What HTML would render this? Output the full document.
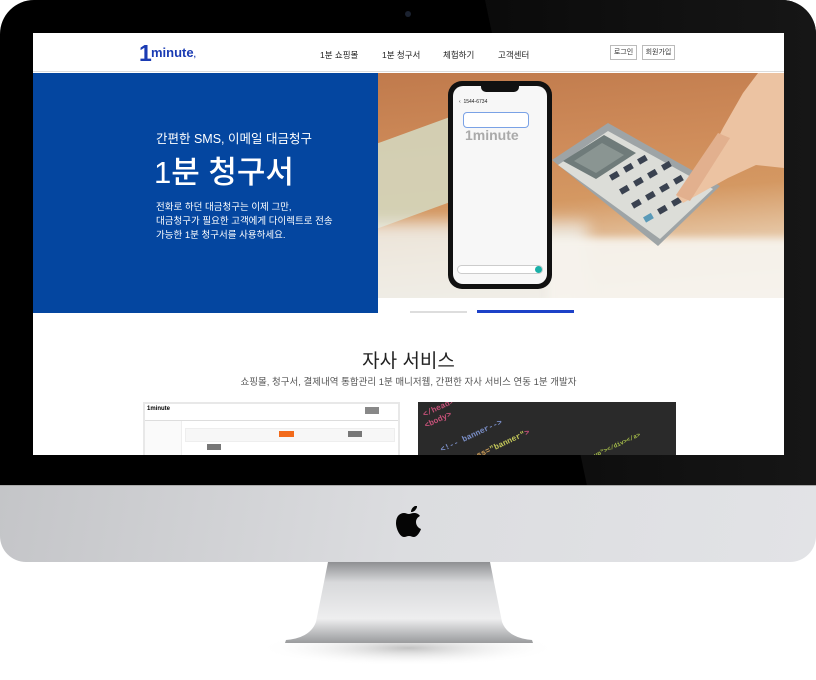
<!DOCTYPE html>
<html><head><meta charset="utf-8"><style>
*{margin:0;padding:0;box-sizing:border-box}
body{width:816px;height:680px;background:#fff;position:relative;overflow:hidden;font-family:"Liberation Sans","Noto Sans CJK KR",sans-serif}
.abs{position:absolute}
.bezel{left:0;top:0;width:816px;height:500px;background:#000;border-radius:34px 34px 0 0}
.gloss{left:470px;top:0;width:346px;height:500px;background:linear-gradient(90deg,#0a0a0a,#161616);clip-path:polygon(15px 0,100% 0,100% 100%,120px 100%);border-top-right-radius:34px}
.chin{left:0;top:485px;width:816px;height:77px;background:linear-gradient(100deg,#c4c5c8,#dcdde0 50%,#e2e3e6);border-radius:0 0 26px 26px;border-top:1px solid #aaa}
.screen{left:33px;top:33px;width:751px;height:422px;background:#fff;overflow:hidden}
.nav{font-size:8.5px;color:#222;top:16px}
.btn{top:12px;height:15px;border:1px solid #bbb;font-size:7px;line-height:13px;text-align:center;color:#333}
.k{fill:#3a4250}
</style></head><body>
<div class="abs bezel"></div>
<div class="abs gloss"></div>
<div class="abs" style="left:405px;top:11px;width:6px;height:6px;border-radius:50%;background:#1b2230"></div>
<div class="abs chin"></div>
<svg class="abs" style="left:392px;top:502px" width="34" height="40" viewBox="0 0 34 40"><path d="M23 4c-2 1-4 3-4 6 2 0 4-1 5-3 1-1 1-2 1-3zM17 12c-2 0-3-1-5-1-4 0-8 3-8 10 0 6 4 14 8 14 2 0 3-1 5-1s3 1 5 1c3 0 6-5 7-8-3-1-5-4-5-7 0-3 2-5 4-6-2-3-5-3-6-3-2 0-4 1-5 1z" fill="#050505"/></svg>
<svg class="abs" style="left:240px;top:562px" width="340" height="118" viewBox="0 0 340 118"><defs><linearGradient id="s" x1="0" x2="0" y1="0" y2="1"><stop offset="0" stop-color="#8e8f92"/><stop offset=".25" stop-color="#d8d9db"/><stop offset=".7" stop-color="#eeeeef"/><stop offset=".9" stop-color="#b5b6b8"/><stop offset="1" stop-color="#9a9b9d"/></linearGradient><radialGradient id="sh"><stop offset="0" stop-color="#999" stop-opacity=".6"/><stop offset="1" stop-color="#fff" stop-opacity="0"/></radialGradient></defs><ellipse cx="168" cy="86" rx="150" ry="18" fill="url(#sh)"/><path d="M88 0H250L262 60Q268 76 292 78L293 81H45L46 78Q70 76 76 60Z" fill="url(#s)"/></svg>
<div class="abs screen">
 <div class="abs" style="left:0;top:0;width:751px;height:39px;border-bottom:1px solid #ddd"></div>
 <div class="abs" style="left:106px;top:8px;font-size:23px;font-weight:bold;color:#1a3bb3;line-height:24px">1</div>
 <div class="abs" style="left:118px;top:12px;font-size:13px;color:#1a3bb3;font-weight:bold">minute<span style="font-size:8px">,</span></div>
 <div class="abs nav" style="left:287px">1분 쇼핑몰</div>
 <div class="abs nav" style="left:349px">1분 청구서</div>
 <div class="abs nav" style="left:410px">체험하기</div>
 <div class="abs nav" style="left:465px">고객센터</div>
 <div class="abs btn" style="left:577px;width:27px">로그인</div>
 <div class="abs btn" style="left:609px;width:33px">회원가입</div>
 <div class="abs" style="left:0;top:40px;width:345px;height:240px;background:#0446a0"></div>
 <div class="abs" style="left:123px;top:95px;font-size:12.5px;color:#fff">간편한 SMS, 이메일 대금청구</div>
 <div class="abs" style="left:121px;top:114px;font-size:31px;color:#fff;font-weight:500">1분 청구서</div>
 <div class="abs" style="left:123px;top:168px;font-size:9.5px;line-height:14px;color:#fff">전화로 하던 대금청구는 이제 그만,<br>대금청구가 필요한 고객에게 다이렉트로 전송<br>가능한 1분 청구서를 사용하세요.</div>
 <div class="abs" style="left:345px;top:40px;width:406px;height:225px;overflow:hidden;background:linear-gradient(175deg,#c07a4c 0%,#cf8c5a 35%,#d49862 55%,#e6c6a4 75%,#f2ede6 100%)">
  <div class="abs" style="left:-20px;top:60px;width:110px;height:80px;background:#d4d6bd;transform:rotate(-20deg);opacity:.9"></div>
  <div class="abs" style="left:-30px;top:150px;width:240px;height:110px;background:rgba(240,240,235,.85);filter:blur(8px)"></div>
  <div class="abs" style="left:170px;top:165px;width:270px;height:80px;background:rgba(245,242,236,.95);filter:blur(4px)"></div>
  <svg class="abs" style="left:0;top:0" width="406" height="225">
   <polygon points="174,87 230,50 342,113 280,173" fill="#9ea4a6"/>
   <polygon points="180,92 230,58 335,116 282,166" fill="#dcddd8"/>
   <polygon points="185,88 226,62 258,80 218,106" fill="#6f7b7a"/>
   <polygon points="196,88 224,70 246,82 218,100" fill="#8a9592"/>
   <g>
    <rect class="k" x="232" y="100" width="9" height="6" transform="rotate(-30 236 103)"/>
    <rect class="k" x="246" y="92" width="9" height="6" transform="rotate(-30 250 95)"/>
    <rect class="k" x="260" y="84" width="9" height="6" transform="rotate(-30 264 87)"/>
    <rect class="k" x="242" y="114" width="9" height="6" transform="rotate(-30 246 117)"/>
    <rect class="k" x="256" y="106" width="9" height="6" transform="rotate(-30 260 109)"/>
    <rect class="k" x="270" y="98" width="9" height="6" transform="rotate(-30 274 101)"/>
    <rect class="k" x="284" y="90" width="9" height="6" transform="rotate(-30 288 93)"/>
    <rect class="k" x="254" y="128" width="9" height="6" transform="rotate(-30 258 131)"/>
    <rect class="k" x="268" y="120" width="9" height="6" transform="rotate(-30 272 123)"/>
    <rect class="k" x="282" y="112" width="9" height="6" transform="rotate(-30 286 115)"/>
    <rect class="k" x="296" y="104" width="9" height="6" transform="rotate(-30 300 107)"/>
    <rect x="266" y="142" width="9" height="6" fill="#5a9ab8" transform="rotate(-30 270 145)"/>
    <rect class="k" x="280" y="134" width="9" height="6" transform="rotate(-30 284 137)"/>
    <rect class="k" x="294" y="126" width="9" height="6" transform="rotate(-30 298 129)"/>
    <rect class="k" x="308" y="118" width="9" height="6" transform="rotate(-30 312 121)"/>
   </g>
   <path d="M406 0L406 95 378 92 350 105 305 130 298 122 330 85 345 55 365 20 380 0Z" fill="#ecc3a2"/>
   <path d="M298 122 340 60 352 65 312 128Z" fill="#e2b08e"/>
  </svg>
 </div>
 <div class="abs" style="left:415px;top:48px;width:104px;height:208px;background:#111;border-radius:14px"></div>
 <div class="abs" style="left:420px;top:53px;width:94px;height:198px;background:#f7f7f7;border-radius:10px"></div>
 <div class="abs" style="left:448px;top:53px;width:38px;height:6px;background:#111;border-radius:0 0 5px 5px"></div>
 <div class="abs" style="left:426px;top:66px;font-size:5px;color:#222">‹ &nbsp;1544-6734</div>
 <div class="abs" style="left:430px;top:79px;width:66px;height:16px;border:1px solid #7aa2e6;border-radius:4px;background:#fff"></div>
 <div class="abs" style="left:432px;top:94px;font-size:14px;color:#aaa;font-weight:bold">1minute</div>
 <div class="abs" style="left:424px;top:232px;width:86px;height:9px;border:1px solid #ccc;border-radius:5px;background:#fff"></div>
 <div class="abs" style="left:502px;top:233px;width:7px;height:7px;border-radius:50%;background:#1ab0a8"></div>
 <div class="abs" style="left:377px;top:278px;width:57px;height:2px;background:#ddd"></div>
 <div class="abs" style="left:444px;top:277px;width:97px;height:3px;background:#1d41c8"></div>
 <div class="abs" style="left:0;top:313px;width:751px;text-align:center;font-size:19px;color:#222">자사 서비스</div>
 <div class="abs" style="left:0;top:341px;width:751px;text-align:center;font-size:9.5px;color:#555">쇼핑몰, 청구서, 결제내역 통합관리 1분 매니저웹, 간편한 자사 서비스 연동 1분 개발자</div>
 <div class="abs" style="left:110px;top:369px;width:257px;height:60px;background:#fff;border:2px solid #e8e8e8">
  <div class="abs" style="left:2px;top:2px;font-size:6px;font-weight:bold">1minute</div>
  <div class="abs" style="left:0;top:16px;width:253px;height:1px;background:#ddd"></div>
  <div class="abs" style="left:0;top:17px;width:37px;height:40px;background:#fafafa;border-right:1px solid #eee"></div>
  <div class="abs" style="left:40px;top:24px;width:210px;height:14px;background:#f7f7f7;border:1px solid #eee"></div>
  <div class="abs" style="left:134px;top:27px;width:15px;height:6px;background:#f26a1b"></div>
  <div class="abs" style="left:203px;top:27px;width:14px;height:6px;background:#777"></div>
  <div class="abs" style="left:220px;top:3px;width:14px;height:7px;background:#888"></div>
  <div class="abs" style="left:62px;top:40px;width:14px;height:6px;background:#777"></div>
 </div>
 <div class="abs" style="left:385px;top:369px;width:258px;height:60px;background:#2a2a2a;overflow:hidden;font-family:'Liberation Mono',monospace;font-size:8px;font-weight:bold">
  <div class="abs" style="left:4px;top:2px;color:#c8527a;transform:rotate(-25deg)">&lt;/head&gt;</div>
  <div class="abs" style="left:6px;top:14px;color:#c8527a;transform:rotate(-25deg)">&lt;body&gt;</div>
  <div class="abs" style="left:20px;top:30px;color:#7b8fc8;transform:rotate(-25deg)">&lt;!-- banner--&gt;</div>
  <div class="abs" style="left:20px;top:46px;color:#c8527a;transform:rotate(-25deg)">&lt;div <span style="color:#d6a35a">class=</span><span style="color:#c5c95a">"banner"</span>&gt;</div>
  <div class="abs" style="left:150px;top:45px;color:#a8c04a;transform:rotate(-25deg);font-size:6px">nt-and-up"&gt;&lt;/div&gt;&lt;/a&gt;</div>
 </div>
</div>
</body></html>
